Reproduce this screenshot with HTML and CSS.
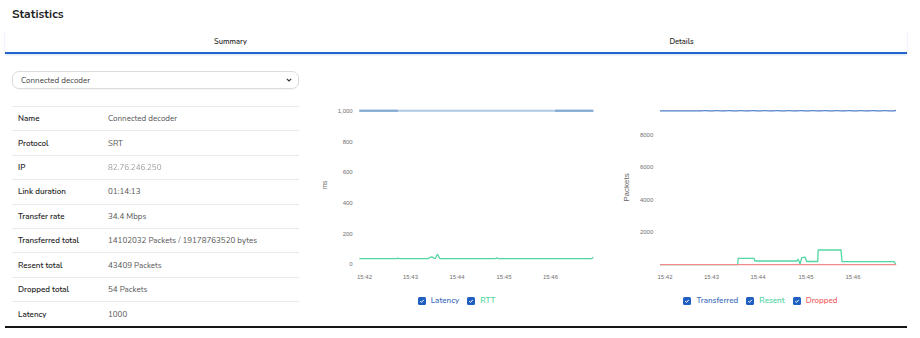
FILE: index.html
```html
<!DOCTYPE html>
<html lang="en">
  <head>
    <meta charset="UTF-8" />
    <meta name="viewport" content="width=device-width, initial-scale=1.0" />
    <title>Statistics</title>
    <link rel="stylesheet" href="styles.css">
  </head>
  <body>
    <div id="page">
      <h1 class="title">Statistics</h1>

      <div class="tabs">
        <div class="tab">Summary</div>
        <div class="tab">Details</div>
      </div>

      <div id="content">
        <div class="summary">
          <div class="select">
            <span>Connected decoder</span>
            <svg width="6" height="4" viewBox="0 0 6 4"><path d="M0.8 0.8 L3 3 L5.2 0.8" fill="none" stroke="#333" stroke-width="1.1"/></svg>
          </div>

          <table class="stats">
            <tr><td class="key">Name</td><td class="val">Connected decoder</td></tr>
            <tr><td class="key">Protocol</td><td class="val">SRT</td></tr>
            <tr><td class="key">IP</td><td class="val"><span class="hidden-ip">82.76.246.250</span></td></tr>
            <tr><td class="key">Link duration</td><td class="val">01:14:13</td></tr>
            <tr><td class="key">Transfer rate</td><td class="val">34.4 Mbps</td></tr>
            <tr><td class="key">Transferred total</td><td class="val">14102032 Packets / 19178763520 bytes</td></tr>
            <tr><td class="key">Resent total</td><td class="val">43409 Packets</td></tr>
            <tr><td class="key">Dropped total</td><td class="val">54 Packets</td></tr>
            <tr><td class="key">Latency</td><td class="val">1000</td></tr>
          </table>
        </div>

        <!-- latency / rtt -->
        <div class="chart chart-ms">
          <svg width="300" height="190" viewBox="0 0 300 190">
            <g class="ticks" text-anchor="end">
              <text x="42.7" y="12.8">1,000</text>
              <text x="42.7" y="43.5">800</text>
              <text x="42.7" y="74.2">600</text>
              <text x="42.7" y="104.9">400</text>
              <text x="42.7" y="135.6">200</text>
              <text x="42.7" y="166.3">0</text>
            </g>
            <text class="axis-title" transform="translate(17 85) rotate(-90)" text-anchor="middle">ms</text>
            <g class="ticks" text-anchor="middle">
              <text x="54.5" y="179">15:42</text>
              <text x="100.5" y="179">15:43</text>
              <text x="147" y="179">15:44</text>
              <text x="194" y="179">15:45</text>
              <text x="240.5" y="179">15:46</text>
            </g>
            <line x1="49.3" y1="10.7" x2="283.3" y2="10.7" stroke="#aecae2" stroke-width="2"/>
            <line x1="49.3" y1="10.7" x2="88" y2="10.7" stroke="#7fa9d2" stroke-width="2"/>
            <line x1="245" y1="10.7" x2="283.3" y2="10.7" stroke="#7fa9d2" stroke-width="2"/>
            <polyline fill="none" stroke="#52d6a2" stroke-width="1.2" stroke-linejoin="round"
              points="49.3,158.7 87,158.7 88,157.9 89,158.7 118,158.7 120,157.3 122,156.8 124,158.3 125.5,158.4 126.8,155 127.8,154.4 129,157.2 130,158.7 185,158.7 186.7,157.9 188.5,158.7 281.5,158.7 283.3,157.3"/>
          </svg>
          <div class="legend">
            <span class="item blue"><svg class="box" viewBox="0 0 8 8"><rect width="8" height="8" rx="1.5" fill="#1f5fc2"/><path d="M2.2 4.2 L3.5 5.4 L5.8 2.8" fill="none" stroke="#fff" stroke-width="1"/></svg>Latency</span>
            <span class="item green"><svg class="box" viewBox="0 0 8 8"><rect width="8" height="8" rx="1.5" fill="#1f5fc2"/><path d="M2.2 4.2 L3.5 5.4 L5.8 2.8" fill="none" stroke="#fff" stroke-width="1"/></svg>RTT</span>
          </div>
        </div>

        <!-- packets -->
        <div class="chart chart-packets">
          <svg width="297" height="190" viewBox="0 0 297 190">
            <g class="ticks" text-anchor="end">
              <text x="43.3" y="37.1">8000</text>
              <text x="43.3" y="69.4">6000</text>
              <text x="43.3" y="102">4000</text>
              <text x="43.3" y="134.4">2000</text>
            </g>
            <text class="axis-title big" transform="translate(18.5 87.5) rotate(-90)" text-anchor="middle">Packets</text>
            <g class="ticks" text-anchor="middle">
              <text x="55" y="179">15:42</text>
              <text x="101.5" y="179">15:43</text>
              <text x="148" y="179">15:44</text>
              <text x="196" y="179">15:45</text>
              <text x="243" y="179">15:46</text>
            </g>
            <polyline fill="none" stroke="#4d80c8" stroke-width="1.2"
              points="50,10.8 92,10.8 95,10.5 98,10.8 104,10.8 107,10.5 110,10.8 116,10.8 119,10.5 122,10.8 128,10.8 131,10.5 134,10.8 140,10.8 143,10.5 146,10.8 152,10.8 155,10.5 158,10.8 164,10.8 167,10.5 170,10.8 176,10.8 179,10.5 182,10.8 188,10.8 191,10.5 194,10.8 200,10.8 203,10.5 206,10.8 212,10.8 215,10.5 218,10.8 224,10.8 227,10.5 230,10.8 236,10.8 239,10.5 242,10.8 248,10.8 251,10.5 254,10.8 260,10.8 263,10.5 266,10.8 272,10.8 275,10.5 278,10.8 284,10.8 286,10.3"/>
            <polyline fill="none" stroke="#52d6a2" stroke-width="1.3" stroke-linejoin="round"
              points="50,164.7 127.7,164.7 128.2,158.3 144,158.3 145,161 187,161 188,159.2 189,161 190,164.5 191.7,157.6 195,157.2 196.7,161.5 207.7,161.5 208.2,150 231,150 232,161.7 284,161.7 286,164.7"/>
            <line x1="50" y1="164.7" x2="286" y2="164.7" stroke="#f38a8a" stroke-width="1.2"/>
          </svg>
          <div class="legend">
            <span class="item blue"><svg class="box" viewBox="0 0 8 8"><rect width="8" height="8" rx="1.5" fill="#1f5fc2"/><path d="M2.2 4.2 L3.5 5.4 L5.8 2.8" fill="none" stroke="#fff" stroke-width="1"/></svg>Transferred</span>
            <span class="item green"><svg class="box" viewBox="0 0 8 8"><rect width="8" height="8" rx="1.5" fill="#1f5fc2"/><path d="M2.2 4.2 L3.5 5.4 L5.8 2.8" fill="none" stroke="#fff" stroke-width="1"/></svg>Resent</span>
            <span class="item red"><svg class="box" viewBox="0 0 8 8"><rect width="8" height="8" rx="1.5" fill="#1f5fc2"/><path d="M2.2 4.2 L3.5 5.4 L5.8 2.8" fill="none" stroke="#fff" stroke-width="1"/></svg>Dropped</span>
          </div>
        </div>
      </div>
    </div>
  </body>
</html>
```

FILE: styles.css
```css
body {
  font-family: "Nunito", "Lato", "Open Sans", sans-serif;
  margin: 0;
  background: #fff;
  color: #222;
}
#page {
  width: 902px;
  margin-left: 5px;
}
.title {
  margin: 0;
  padding: 6px 0 0 7px;
  font-size: 12px;
  line-height: 16px;
  font-weight: 700;
  color: #1e1e1e;
}
.tabs {
  display: flex;
  margin-top: 8px;
  border-bottom: 2px solid #2463c9;
  box-shadow: 0 1px 2px rgba(36, 99, 201, 0.2);
}
.tab {
  flex: 1;
  text-align: center;
  font-size: 7.5px;
  line-height: 20px;
  padding-top: 2px;
  font-weight: 600;
  color: #2a2a2a;
}
#content {
  display: flex;
  align-items: flex-start;
  padding-top: 17px;
  border-bottom: 2px solid #151515;
}
.summary {
  width: 287px;
  margin-left: 7px;
}
.select {
  height: 18px;
  box-sizing: border-box;
  border: 1px solid #dcdcdc;
  border-radius: 7px;
  display: flex;
  align-items: center;
  justify-content: space-between;
  padding: 0 6px 0 8px;
  font-size: 8px;
  color: #444;
  box-shadow: 0 1px 1px rgba(0, 0, 0, 0.04);
}
.stats {
  width: 100%;
  margin-top: 17px;
  border-collapse: collapse;
  font-size: 8px;
}
.stats td {
  height: 24.4px;
  padding: 0;
  border-top: 1px solid #e9e9e9;
  box-sizing: border-box;
}
.stats .key {
  width: 96px;
  padding-left: 6px;
  font-weight: 600;
  color: #252525;
}
.stats .val {
  color: #555;
}
.hidden-ip {
  color: #a0a0a0;
  filter: blur(0.6px);
}
.chart {
  margin-top: 29px;
}
.chart svg {
  display: block;
}
.chart-ms {
  width: 300px;
  margin-left: 11px;
}
.chart-packets {
  width: 297px;
}
.ticks {
  font-family: "Liberation Sans", Arial, sans-serif;
  font-size: 6px;
  fill: #707070;
}
.axis-title {
  font-family: "Liberation Sans", Arial, sans-serif;
  font-size: 6.5px;
  fill: #666;
}
.axis-title.big {
  font-size: 8px;
}
.legend {
  display: flex;
  justify-content: center;
  gap: 8px;
  margin-top: 6px;
  height: 10px;
  line-height: 10px;
  font-size: 8px;
  font-weight: 600;
}
.chart-ms .legend {
  padding-right: 7px;
}
.chart-packets .legend {
  padding-left: 4px;
}
.legend .item {
  display: flex;
  align-items: center;
  gap: 5px;
}
.legend .box {
  width: 8px;
  height: 8px;
}
.blue {
  color: #4571bd;
}
.green {
  color: #4fd59f;
}
.red {
  color: #ef6464;
}
```
